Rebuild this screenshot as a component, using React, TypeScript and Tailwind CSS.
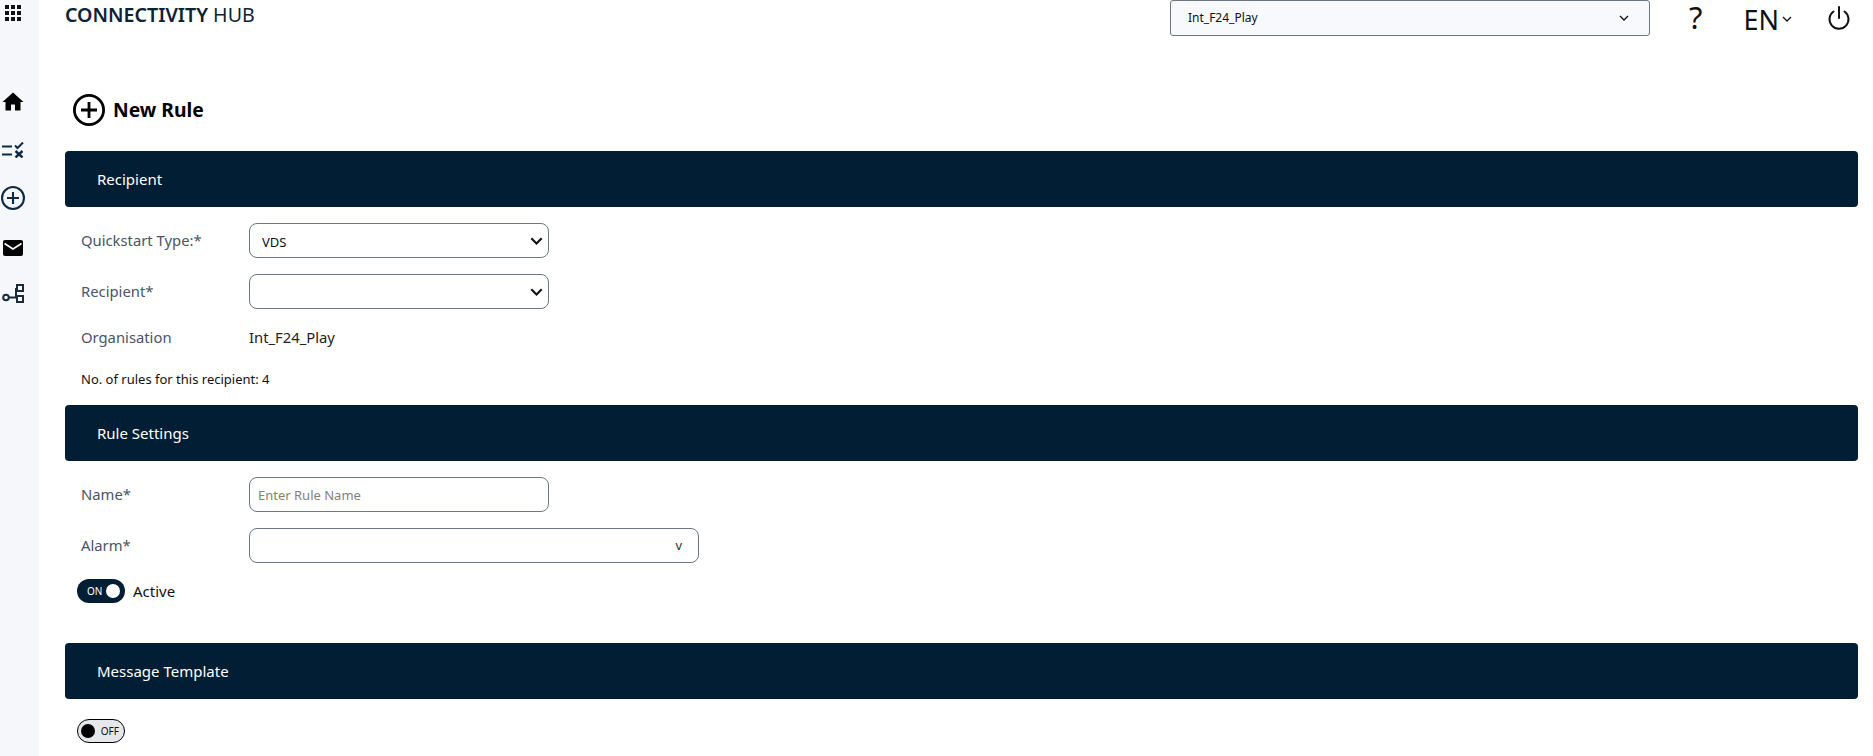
const SectionBar = ({ title }: { title: string }) => (
  <div className="h-14 w-full flex items-center pl-8 rounded-[4px] bg-[#021e35] text-white text-[15px]">
    {title}
  </div>
);

const labelClass = "w-[184px] pl-4 shrink-0 text-[14.8px] text-[#4a5568]";
const fieldClass =
  "h-[35px] rounded-lg border border-[#6b7785] bg-white text-[#111] outline-none";

const GridIcon = () => (
  <svg width="16" height="16" viewBox="0 0 16 16" fill="#111">
    <rect x="0" y="0" width="4" height="4" />
    <rect x="6" y="0" width="4" height="4" />
    <rect x="12" y="0" width="4" height="4" />
    <rect x="0" y="6" width="4" height="4" />
    <rect x="6" y="6" width="4" height="4" />
    <rect x="12" y="6" width="4" height="4" />
    <rect x="0" y="12" width="4" height="4" />
    <rect x="6" y="12" width="4" height="4" />
    <rect x="12" y="12" width="4" height="4" />
  </svg>
);

const HomeIcon = () => (
  <svg width="24" height="24" viewBox="0 0 24 24" fill="#000">
    <path d="M10 20.5v-6h4v6h5.5v-8.5h3L12 2.5 1.5 12h3v8.5z" />
  </svg>
);

const RulesIcon = () => (
  <svg width="22" height="16" viewBox="0 0 22 16" fill="none" stroke="#0d2b45" strokeWidth="2">
    <path d="M0 4.5h10M0 12.5h10" />
    <path d="M13 3.5l2.5 2.5L21 .5" />
    <path d="M13.5 9l7 6.5M20.5 9l-7 6.5" strokeWidth="2.4" />
  </svg>
);

const PlusCircle = ({ size, color, width }: { size: number; color: string; width: number }) => (
  <svg width={size} height={size} viewBox="0 0 32 32" fill="none" stroke={color} strokeWidth={width}>
    <circle cx="16" cy="16" r={16 - width / 2} />
    <path d="M16 8v16M8 16h16" />
  </svg>
);

const MailIcon = () => (
  <svg width="20" height="16" viewBox="0 0 20 16">
    <rect width="20" height="16" rx="2" fill="#000" />
    <path d="M1.5 3.5l8.5 5.5 8.5-5.5" fill="none" stroke="#fff" strokeWidth="1.6" />
  </svg>
);

const FlowIcon = () => (
  <svg width="22" height="19" viewBox="0 0 22 19" fill="none" stroke="#1a2b3a" strokeWidth="2">
    <circle cx="4" cy="13.5" r="2.8" />
    <path d="M7 13.5h8M14 4v10" />
    <rect x="15" y="1" width="6" height="6" />
    <rect x="15" y="12" width="6" height="6" />
  </svg>
);

const PowerIcon = () => (
  <svg width="24" height="26" viewBox="0 0 24 26" fill="none" stroke="#111" strokeWidth="2" strokeLinecap="round">
    <path d="M12 2v11" />
    <path d="M6.5 6.5a9.5 9.5 0 1 0 11 0" />
  </svg>
);

const Chevron = ({ w, color, sw = 1.3 }: { w: number; color: string; sw?: number }) => (
  <svg width={w} height={w * 0.6} viewBox="0 0 10 6" fill="none" stroke={color} strokeWidth={sw}>
    <path d="M1 1l4 4 4-4" />
  </svg>
);

const SelectField = ({ value }: { value: string }) => (
  <div className="relative w-[300px]">
    <select
      className={`${fieldClass} w-full appearance-none pl-[12px] pt-[5px] text-[13px]`}
      defaultValue={value}
    >
      <option>{value}</option>
    </select>
    <span className="absolute right-[6px] top-[14px] flex pointer-events-none">
      <Chevron w={13} color="#111" sw={1.6} />
    </span>
  </div>
);

export default function App() {
  return (
    <div className="flex h-screen overflow-hidden bg-white font-['Noto_Sans',sans-serif]">
      {/* Sidebar */}
      <aside className="w-[39px] shrink-0 bg-[#f5f7fa] flex flex-col pl-[1px]">
        <div className="pt-[5px] pl-[4px] h-[90px]">
          <GridIcon />
        </div>
        <div className="h-6 flex items-center">
          <HomeIcon />
        </div>
        <div className="h-4 mt-[28px] flex items-center pl-[1px]">
          <RulesIcon />
        </div>
        <div className="h-6 mt-[28px] flex items-center">
          <PlusCircle size={24} color="#0d2b45" width={2.8} />
        </div>
        <div className="h-4 mt-[30px] flex items-center pl-[2px]">
          <MailIcon />
        </div>
        <div className="h-[19px] mt-[28px] flex items-center pl-[1px]">
          <FlowIcon />
        </div>
      </aside>

      <div className="flex-1 pl-[26px] pr-[15px]">
        {/* Header */}
        <header className="h-[36px] flex items-start">
          <div className="text-[19.6px] leading-[29px] text-[#0d2236]">
            <span className="font-semibold">CONNECTIVITY</span> HUB
          </div>
          <div className="ml-auto flex items-start mr-[7px]">
            <div className="w-[480px] h-[36px] rounded-[3px] border border-[#6b7785] bg-[#f7f9fc] flex items-center pl-[17px] pr-[20px] text-[12px] text-[#111]">
              <span>Int_F24_Play</span>
              <span className="ml-auto">
                <Chevron w={10} color="#111" />
              </span>
            </div>
            <span className="ml-[39px] text-[31px] leading-[34px] text-[#111]">?</span>
            <span className="ml-[41px] mt-[2px] text-[27px] leading-[36px] text-[#111]">EN</span>
            <span className="ml-[3px] mt-[16px]">
              <Chevron w={10} color="#111" />
            </span>
            <span className="ml-[35px] mt-[5px]">
              <PowerIcon />
            </span>
          </div>
        </header>

        {/* Title */}
        <div className="h-[115px] flex items-center pl-[8px] gap-[8px] pt-[33px]">
          <PlusCircle size={32} color="#000" width={2.8} />
          <h1 className="text-[19.3px] font-bold text-black">New Rule</h1>
        </div>

        <SectionBar title="Recipient" />
        <div className="pt-4 flex flex-col gap-4">
          <div className="flex items-center">
            <label className={labelClass}>Quickstart Type:*</label>
            <SelectField value="VDS" />
          </div>
          <div className="flex items-center">
            <label className={labelClass}>Recipient*</label>
            <SelectField value="" />
          </div>
        </div>
        <div className="flex items-center h-[20px] mt-[18px]">
          <span className={labelClass}>Organisation</span>
          <span className="text-[14.8px] text-[#222]">Int_F24_Play</span>
        </div>
        <p className="pl-4 mt-[22px] text-[13px] leading-[20px] text-[#111]">No. of rules for this recipient: 4</p>
        <div className="mt-4">
          <SectionBar title="Rule Settings" />
        </div>

        <div className="pt-4 flex flex-col gap-4">
          <div className="flex items-center">
            <label className={labelClass}>Name*</label>
            <input
              className={`${fieldClass} w-[300px] pl-2 text-[13px] placeholder:text-[#857f78]`}
              placeholder="Enter Rule Name"
            />
          </div>
          <div className="flex items-center">
            <label className={labelClass}>Alarm*</label>
            <div className={`${fieldClass} w-[450px] flex items-center justify-end pr-[16px] text-[13px] text-[#333]`}>
              v
            </div>
          </div>
        </div>

        <div className="flex items-center gap-2 pl-3 mt-4">
          <div className="w-[48px] h-6 rounded-full bg-[#021e35] flex items-center pl-[10px] pr-[5px] justify-between">
            <span className="text-[10px] text-white">ON</span>
            <span className="w-[14px] h-[14px] rounded-full bg-white" />
          </div>
          <span className="text-[15px] text-[#111]">Active</span>
        </div>

        <div className="mt-10">
          <SectionBar title="Message Template" />
        </div>

        <div className="pl-3 mt-5">
          <div className="w-[48px] h-6 rounded-full border border-black bg-[#e5e7eb] flex items-center pl-[3px] pr-[5px] justify-between">
            <span className="w-[14px] h-[14px] rounded-full bg-black" />
            <span className="text-[10px] text-[#111]">OFF</span>
          </div>
        </div>
      </div>
    </div>
  );
}
